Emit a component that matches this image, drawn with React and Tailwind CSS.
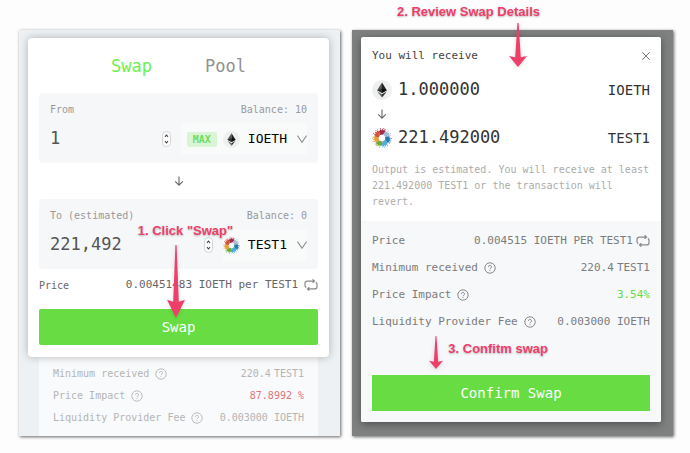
import { useId } from 'react';

/* ── Icons ── */
function EthIcon({ className }) {
  return (
    <svg viewBox="0 0 20 20" className={className} aria-hidden="true">
      <circle cx="10" cy="10" r="10" fill="#eeefef" />
      <path d="M10 2.6 5.2 10.3 10 13z" fill="#555" />
      <path d="M10 2.6 14.8 10.3 10 13z" fill="#1f1f1f" />
      <path d="M5.2 10.3 10 8.4V13z" fill="#333" />
      <path d="M14.8 10.3 10 8.4V13z" fill="#0d0d0d" />
      <path d="M5.2 11.6 10 17.4V14.3z" fill="#666" />
      <path d="M14.8 11.6 10 17.4V14.3z" fill="#2b2b2b" />
    </svg>
  );
}

const petals = ['#a9294b', '#a9bdd6', '#2779ae', '#48b0dc', '#77a63f', '#e8a03a', '#d4533b'];

function TestIcon({ className }) {
  return (
    <svg viewBox="-10 -10 20 20" className={className} aria-hidden="true">
      {petals.map((color, i) => (
        <g key={color} fill={color} transform={`rotate(${(i * 360) / petals.length})`}>
          <path d="M-1.9-2.9 1-3.4 3.6-6.2 2.9-7.1 2.3-8.9 1.4-7.4.2-9.6-.6-7.4-2-8.9-2.2-7-3.3-7.2z" />
          <circle cx="-1.6" cy="-9.4" r=".5" />
          <circle cx="1.8" cy="-9.4" r=".5" />
          <circle cx="3.5" cy="-8.3" r=".5" />
        </g>
      ))}
    </svg>
  );
}

function LoopIcon() {
  return (
    <svg viewBox="0 0 14 12" className="h-3 w-3.5 shrink-0" fill="none" stroke="#888" strokeWidth="1.2" aria-hidden="true">
      <path d="M2.2 8.6C1.4 8.2 1 7.6 1 6.8V4.3a2.2 2.2 0 0 1 2.2-2.2h7M8.6.4l1.9 1.7-1.9 1.7M11.8 3.4c.8.4 1.2 1 1.2 1.8v2.5a2.2 2.2 0 0 1-2.2 2.2h-7M5.4 8.2 3.5 9.9l1.9 1.7" />
    </svg>
  );
}

function HelpIcon() {
  return (
    <svg viewBox="0 0 12 12" className="size-3 shrink-0" fill="none" stroke="currentColor" strokeWidth=".9" aria-hidden="true">
      <circle cx="6" cy="6" r="5.2" />
      <path d="M4.5 4.9a1.5 1.5 0 1 1 2.3 1.2c-.6.4-.8.6-.8 1.1M6 8.2v.9" />
    </svg>
  );
}

function DownIcon() {
  return (
    <svg viewBox="0 0 10 10" className="size-2.5" fill="none" stroke="#666" strokeWidth="1.1" aria-hidden="true">
      <path d="M5 .5v8.7M1.2 5.3 5 9.2l3.8-3.9" />
    </svg>
  );
}

function Chevron() {
  return (
    <svg viewBox="0 0 10 8" className="h-2 w-2.5" fill="none" stroke="#8d8d8d" strokeWidth="1.1" aria-hidden="true">
      <path d="M.4.6 5 7.2 9.6.6" />
    </svg>
  );
}

function Stepper() {
  return (
    <svg viewBox="0 0 9 16" className="h-4 w-[9px] shrink-0" fill="none" aria-hidden="true">
      <rect x=".5" y=".5" width="8" height="15" rx="3.8" fill="#fff" stroke="#ccc" strokeWidth=".8" />
      <path d="M3 5.8 4.5 4 6 5.8M3 10.2 4.5 12 6 10.2" stroke="#444" strokeWidth="1.1" />
    </svg>
  );
}

/* ── Tutorial marks ── */
function Arrow({ className }) {
  return (
    <svg viewBox="0 0 18 72" preserveAspectRatio="none" className={`absolute z-10 drop-shadow-sm ${className}`} fill="#ee3f6b" aria-hidden="true">
      <path d="M8.4 0h1.2l2.2 56 6.2-2L9 72 0 54l6.2 2z" />
    </svg>
  );
}

function Note({ className, children }) {
  return (
    <p className={`absolute z-10 font-['Liberation_Sans',sans-serif] text-[13px] leading-4 font-bold whitespace-nowrap text-[#ef3e69] [text-shadow:0_1px_2px_#0004,0_0_2px_#fff] ${className}`}>
      {children}
    </p>
  );
}

/* ── Swap form ── */
function TokenField({ label, balance, value, token, icon: Icon, max }) {
  const id = useId();
  return (
    <div className="rounded-sm bg-[#f6f7f9] px-[11px] pt-2.5 pb-2">
      <div className="flex justify-between text-[10px] leading-[14px] text-[#999]">
        <label htmlFor={id}>{label}</label>
        <span>Balance: {balance}</span>
      </div>
      <div className="mt-1.5 flex h-8 items-center gap-2.5">
        <input id={id} defaultValue={value} className="min-w-0 flex-1 bg-transparent text-[17px] text-[#555] outline-none" />
        <Stepper />
        <div className="flex h-full items-center gap-1.5 bg-[#f9fafa]">
          {max && (
            <button className="ml-1.5 h-[15px] rounded-xs bg-[#d9f5d6] px-1.5 text-[10px] leading-[15px] font-bold text-[#6fdc5c]">MAX</button>
          )}
          <button className="flex items-center text-[13px] text-black">
            <Icon className="mr-2 size-[17px]" />
            {token}
            <span className="ml-2.5"><Chevron /></span>
          </button>
        </div>
      </div>
    </div>
  );
}

function Row({ label, help, children }) {
  return (
    <div className="flex items-center justify-between whitespace-nowrap">
      <dt className="flex items-center gap-1.5">{label}{help && <HelpIcon />}</dt>
      <dd className="flex items-center gap-[3px]">{children}</dd>
    </div>
  );
}

function SwapPanel() {
  return (
    <section className="relative bg-[#edf1f4] pt-2 pr-[11px] pl-[9px] shadow-[1px_1px_3px_#0009]">
      <div className="relative rounded-sm bg-white px-[11px] pb-3 shadow-[0_0_8px_#0004]">
        <nav className="flex justify-center gap-[53px] pt-4 pb-[15px] text-[17px] leading-6">
          <a href="#swap" className="text-[#6bf24e]">Swap</a>
          <a href="#pool" className="text-[#929292]">Pool</a>
        </nav>
        <TokenField label="From" balance="10" value="1" token="IOETH" icon={EthIcon} max />
        <div className="flex h-9 items-center justify-center"><DownIcon /></div>
        <TokenField label="To (estimated)" balance="0" value="221,492" token="TEST1" icon={TestIcon} />
        <div className="flex h-8 items-center text-[#666]">
          <span className="text-[10px]">Price</span>
          <span className="ml-auto text-[11px]">0.00451483 IOETH per TEST1</span>
          <button aria-label="Invert price" className="ml-1.5"><LoopIcon /></button>
        </div>
        <button className="mt-2 h-9 w-full rounded-xs bg-[#67dd43] text-sm text-white">Swap</button>
      </div>
      <dl className="mx-[11px] flex flex-col gap-[7px] bg-[#f9fafb] px-3.5 pt-[9px] pb-[11px] text-[10px] leading-[15px] text-[#b5b5b5]">
        <Row label="Minimum received" help>220.4<span>TEST1</span></Row>
        <Row label="Price Impact" help><span className="text-[#e0727a]">87.8992 %</span></Row>
        <Row label="Liquidity Provider Fee" help>0.003000 IOETH</Row>
      </dl>
      <Note className="top-[193px] left-[37%]">1. Click "Swap"</Note>
      <Arrow className="top-[215px] left-[46%] h-[73px] w-[18px]" />
    </section>
  );
}

/* ── Confirmation dialog ── */
function ConfirmPanel() {
  return (
    <section className="relative bg-[#7f8080] pt-[7px] pr-3 pb-3.5 pl-[9px] shadow-[1px_1px_3px_#0009]">
      <div role="dialog" aria-labelledby="receive" className="overflow-hidden rounded-xs bg-white shadow-[0_2px_8px_#0006]">
        <div className="px-[11px] pt-2.5 pb-[11px]">
          <div className="flex items-center justify-between">
            <h2 id="receive" className="text-[11px] leading-[18px] text-[#444]">You will receive</h2>
            <button aria-label="Close" className="text-[#777]">
              <svg viewBox="0 0 8 8" className="size-2" fill="none" stroke="currentColor" aria-hidden="true"><path d="m.3.3 7.4 7.4M7.7.3.3 7.7" /></svg>
            </button>
          </div>
          <div className="mt-3.5 flex h-[22px] items-center text-[17px] text-[#333]">
            <EthIcon className="mr-1.5 size-5" />
            1.000000
            <span className="ml-auto text-sm">IOETH</span>
          </div>
          <div className="flex h-[26px] w-5 items-center justify-center"><DownIcon /></div>
          <div className="flex h-[22px] items-center text-[17px] text-[#333]">
            <TestIcon className="mr-1.5 size-5" />
            221.492000
            <span className="ml-auto text-sm">TEST1</span>
          </div>
          <p className="mt-[13px] text-[10px] leading-4 text-[#acacac]">
            Output is estimated. You will receive at least 221.492000 TEST1 or the transaction will revert.
          </p>
        </div>
        <div className="bg-[#f6f8fa] px-[11px] pt-3 pb-[11px]">
          <dl className="flex flex-col gap-[11px] text-[11px] leading-4 text-[#7c7c7c]">
            <Row label="Price">0.004515 IOETH PER TEST1<button aria-label="Invert price"><LoopIcon /></button></Row>
            <Row label="Minimum received" help>220.4<span>TEST1</span></Row>
            <Row label="Price Impact" help><span className="text-[#5fdc46]">3.54%</span></Row>
            <Row label="Liquidity Provider Fee" help>0.003000 IOETH</Row>
          </dl>
          <button className="mt-[45px] h-9 w-full bg-[#67dd43] text-sm text-white">Confirm Swap</button>
        </div>
      </div>
      <Note className="-top-[26px] left-[14%]">2. Review Swap Details</Note>
      <Arrow className="-top-[7px] left-[49%] h-11 w-[18px]" />
      <Arrow className="top-[306px] left-[24%] h-[33px] w-3.5" />
      <Note className="top-[311px] left-[30%]">3. Confitm swap</Note>
    </section>
  );
}

export default function App() {
  return (
    <main className="grid min-h-screen grid-cols-2 items-start gap-3 bg-[#fdfdfd] pt-[30px] pr-[17px] pl-[19px] font-['DejaVu_Sans_Mono',monospace]">
      <SwapPanel />
      <ConfirmPanel />
    </main>
  );
}
